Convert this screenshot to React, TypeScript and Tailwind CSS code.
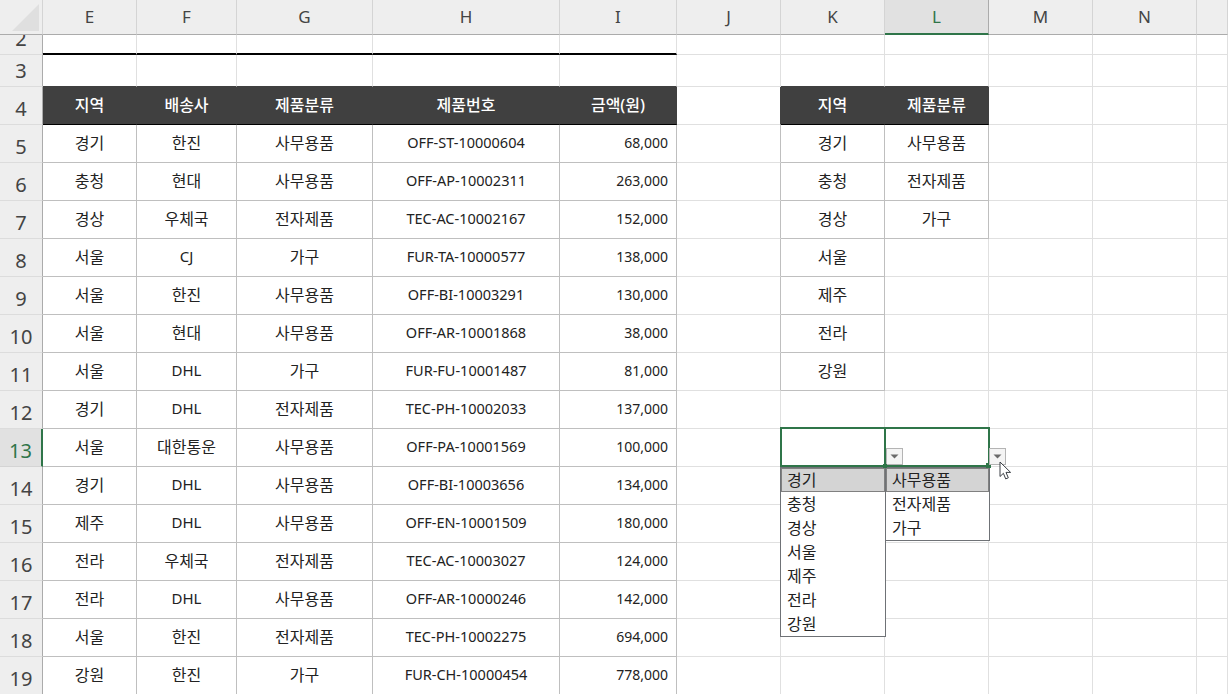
const font = "font-['Noto_Sans','Noto_Sans_CJK_KR',sans-serif]";

const columns = ["E", "F", "G", "H", "I", "J", "K", "L", "M", "N", ""];

const headers = ["지역", "배송사", "제품분류", "제품번호", "금액(원)"];

const orders = [
  ["경기", "한진", "사무용품", "OFF-ST-10000604", "68,000"],
  ["충청", "현대", "사무용품", "OFF-AP-10002311", "263,000"],
  ["경상", "우체국", "전자제품", "TEC-AC-10002167", "152,000"],
  ["서울", "CJ", "가구", "FUR-TA-10000577", "138,000"],
  ["서울", "한진", "사무용품", "OFF-BI-10003291", "130,000"],
  ["서울", "현대", "사무용품", "OFF-AR-10001868", "38,000"],
  ["서울", "DHL", "가구", "FUR-FU-10001487", "81,000"],
  ["경기", "DHL", "전자제품", "TEC-PH-10002033", "137,000"],
  ["서울", "대한통운", "사무용품", "OFF-PA-10001569", "100,000"],
  ["경기", "DHL", "사무용품", "OFF-BI-10003656", "134,000"],
  ["제주", "DHL", "사무용품", "OFF-EN-10001509", "180,000"],
  ["전라", "우체국", "전자제품", "TEC-AC-10003027", "124,000"],
  ["전라", "DHL", "사무용품", "OFF-AR-10000246", "142,000"],
  ["서울", "한진", "전자제품", "TEC-PH-10002275", "694,000"],
  ["강원", "한진", "가구", "FUR-CH-10000454", "778,000"],
];

const regions = ["경기", "충청", "경상", "서울", "제주", "전라", "강원"];
const categories = ["사무용품", "전자제품", "가구"];

const rows = Array.from({ length: 18 }, (_, i) => i + 2);

function cellText(col: number, row: number): string {
  if (col <= 4) {
    if (row === 4) return headers[col];
    if (row >= 5) return orders[row - 5][col];
  }
  if (col === 6) {
    if (row === 4) return "지역";
    if (row >= 5 && row <= 11) return regions[row - 5];
  }
  if (col === 7) {
    if (row === 4) return "제품분류";
    if (row >= 5 && row <= 7) return categories[row - 5];
  }
  return "";
}

function cellBorders(col: number, row: number): string {
  const inMain = col <= 4;
  const inRegion = col === 6;
  const inCategory = col === 7;
  let right = "border-r-[#e0e0e0]";
  let bottom = "border-b-[#e0e0e0]";

  if (row === 2 && inMain) bottom = "border-b-2 border-b-black";
  if (row === 3 && (inMain || inRegion || inCategory)) bottom = "border-b-[#404040]";
  if (row === 4 && (inMain || inRegion || inCategory)) {
    right = "border-r-[#404040]";
    bottom = "border-b-black";
  }
  if (row === 4 && col === 5) right = "border-r-[#404040]";
  if (row >= 5 && inMain) {
    right = "border-r-[#bfbfbf]";
    bottom = "border-b-[#bfbfbf]";
  }
  if (row >= 5 && row <= 11 && (inRegion || col === 5)) right = "border-r-[#bfbfbf]";
  if (row >= 5 && row <= 11 && inRegion) bottom = "border-b-[#bfbfbf]";
  if (row >= 5 && row <= 7 && inCategory) {
    right = "border-r-[#bfbfbf]";
    bottom = "border-b-[#bfbfbf]";
  }
  return `${right} ${bottom}`;
}

// Hangul runs wider in the sheet than the latin text next to it
function textSize(text: string, col: number): string {
  if (/[가-힣]/.test(text)) return "text-[16px]";
  if (col === 1) return "text-[15px]";
  return col === 3 ? "text-[14.5px]" : "text-[14px]";
}

function ColumnHeader({ label }: { label: string }) {
  const selected = label === "L";
  return (
    <div
      className={
        selected
          ? "flex items-center justify-center border-r border-r-[#ababab] border-b-2 border-b-[#2f7549] bg-[#e1e1e1] text-[17px] text-[#2f7549]"
          : "flex items-center justify-center border-r border-r-[#d4d4d4] border-b border-b-[#ababab] bg-[#eeeeee] text-[17px] text-[#444444]"
      }
    >
      {label}
    </div>
  );
}

function RowHeader({ row }: { row: number }) {
  const selected = row === 13;
  return (
    <div
      className={
        selected
          ? "flex items-end justify-center overflow-hidden border-r-2 border-r-[#2f7549] border-b border-b-[#d4d4d4] bg-[#e1e1e1] pb-[1px] text-[20px] leading-[28px] text-[#2f7549]"
          : "flex items-end justify-center overflow-hidden border-r border-r-[#ababab] border-b border-b-[#dcdcdc] bg-[#eeeeee] pb-[1px] text-[20px] leading-[28px] text-[#444444]"
      }
    >
      {row}
    </div>
  );
}

function Cell({ col, row }: { col: number; row: number }) {
  const text = cellText(col, row);
  const isHeader = row === 4 && text !== "";
  const fill = row === 4 && (col <= 4 || col === 6 || col === 7) ? "bg-[#404040]" : "bg-white";
  const align = col === 4 && row >= 5 ? "justify-end pr-2" : "justify-center";
  return (
    <div
      className={`flex items-center border-r border-b pb-[2px] ${textSize(text, col)} ${fill} ${align} ${cellBorders(col, row)} ${
        isHeader ? "font-medium text-white" : "text-[#222222]"
      }`}
    >
      {text}
    </div>
  );
}

function DropButton() {
  return (
    <div className="flex h-[17px] w-[17px] shrink-0 items-center justify-center border border-[#b4b4b4] bg-[#f4f4f4]">
      <svg width="9" height="5" viewBox="0 0 9 5">
        <path d="M0.5 0.5h8L4.5 4.5z" fill="#6a6a6a" />
      </svg>
    </div>
  );
}

function ListBox({ items, className }: { items: string[]; className: string }) {
  return (
    <div className={`border border-[#6f7276] bg-white text-[16px] text-[#222222] ${className}`}>
      {items.map((item, i) => (
        <div
          key={item}
          className={
            i === 0
              ? "flex h-[24px] items-center border border-[#808080] bg-[#d4d4d4] pl-[5px]"
              : "flex h-[24px] items-center pl-[6px]"
          }
        >
          {item}
        </div>
      ))}
    </div>
  );
}

// Selection on K13:L13 with its two open validation lists, floating over the grid
function ValidationOverlay() {
  return (
    <div className="absolute top-[427px] left-[780px] flex w-[226px] flex-col">
      <div className="flex h-[40px] items-end">
        <div className="h-full w-[106px] border-2 border-[#2f7549]" />
        <div className="relative flex h-full w-[104px] items-end border-y-2 border-r-2 border-[#2f7549]">
          <DropButton />
          <div className="absolute -bottom-[3px] -left-[3px] h-[4px] w-[4px] bg-[#2f7549]" />
          <div className="absolute -right-[3px] -bottom-[3px] h-[5px] w-[5px] bg-[#2f7549]" />
        </div>
        <div className="relative -ml-px mb-[2px]">
          <DropButton />
          {/* Mouse pointer */}
          <svg className="absolute top-[13px] left-[10px]" width="14" height="20" viewBox="0 0 14 20">
            <path
              d="M1 1v14.5l3.4-3.2 2.3 5.6 2.6-1.1-2.3-5.4h4.6z"
              fill="#ffffff"
              stroke="#3a3f45"
              strokeWidth="1"
            />
          </svg>
        </div>
      </div>
      <div className="flex items-start">
        <ListBox items={regions} className="w-[106px]" />
        <ListBox items={categories} className="-ml-px w-[105px]" />
      </div>
    </div>
  );
}

export default function App() {
  return (
    <div className={`relative h-[694px] w-[1228px] overflow-hidden bg-white ${font}`}>
      <div className="grid grid-cols-[43px_94px_100px_136px_187px_117px_104px_104px_104px_104px_104px_31px] grid-rows-[35px_20px_32px_repeat(16,38px)]">
        {/* Corner */}
        <div className="flex items-start justify-end border-r border-r-[#d4d4d4] border-b border-b-[#ababab] bg-[#eeeeee] pt-1 pr-[3px]">
          <svg width="27" height="27" viewBox="0 0 27 27">
            <path d="M27 0v27H0z" fill="#dfdfdf" />
          </svg>
        </div>
        {columns.map((label, i) => (
          <ColumnHeader key={i} label={label} />
        ))}

        {rows.map((row) => (
          <div key={row} className="contents">
            <RowHeader row={row} />
            {columns.map((_, col) => (
              <Cell key={col} col={col} row={row} />
            ))}
          </div>
        ))}
      </div>

      <ValidationOverlay />
    </div>
  );
}
